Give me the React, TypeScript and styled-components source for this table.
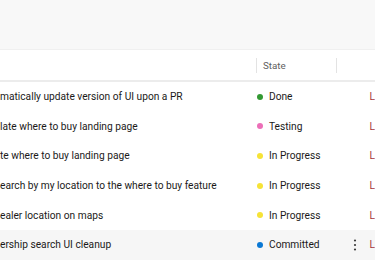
import React from "react";
import styled, { createGlobalStyle } from "styled-components";

const Global = createGlobalStyle`
  html, body { margin: 0; padding: 0; background: #ffffff; overflow: hidden; }
  body { font-family: Roboto, "Open Sans", sans-serif; }
`;

const Page = styled.div`
  width: 375px;
  height: 260px;
  overflow: hidden;
  display: flex;
  flex-direction: column;
`;

const TopBar = styled.div`
  height: 49px;
  flex: none;
  background: #f8f8f8;
  border-bottom: 1px solid #f0f0f0;
`;

const COLS = "256px 80px 1fr";

const HeaderRow = styled.div`
  display: grid;
  grid-template-columns: ${COLS};
  height: 30px;
  flex: none;
  border-bottom: 2px solid #ececec;
  align-items: center;
`;

const HeaderCell = styled.div<{ $sep?: boolean }>`
  height: 15px;
  display: flex;
  align-items: center;
  padding-left: 6px;
  border-left: ${(p) => (p.$sep ? "1px solid #e3e3e3" : "none")};
  font-size: 9.8px;
  color: #5f5f5f;
  white-space: nowrap;
`;

const Row = styled.div<{ $hover?: boolean }>`
  display: grid;
  grid-template-columns: ${COLS};
  height: 29.6px;
  flex: none;
  align-items: center;
  background: ${(p) => (p.$hover ? "#f6f6f6" : "transparent")};
  font-size: 10.2px;
  color: #1b1a19;
`;

const TitleCell = styled.div`
  white-space: nowrap;
`;

const StateCell = styled.div`
  display: flex;
  align-items: center;
  gap: 6px;
  padding-left: 1px;
  white-space: nowrap;
`;

const Dot = styled.span<{ $color: string }>`
  width: 6px;
  height: 6px;
  border-radius: 50%;
  background: ${(p) => p.$color};
  flex: none;
`;

const TailCell = styled.div`
  display: flex;
  align-items: center;
  white-space: nowrap;
  overflow: hidden;
`;

const MoreSlot = styled.span`
  width: 6px;
  margin-left: 17px;
  margin-right: 12px;
  display: flex;
  justify-content: center;
`;

const Clipped = styled.span`
  color: #a4373a;
`;

const MoreIcon = () => (
  <svg width="4" height="12" viewBox="0 0 4 12">
    <circle cx="2" cy="1.5" r="1.1" fill="#3a3a3a" />
    <circle cx="2" cy="6" r="1.1" fill="#3a3a3a" />
    <circle cx="2" cy="10.5" r="1.1" fill="#3a3a3a" />
  </svg>
);

const rows = [
  { title: "matically update version of UI upon a PR", state: "Done", color: "#339933" },
  { title: "late where to buy landing page", state: "Testing", color: "#ec6fb8" },
  { title: "te where to buy landing page", state: "In Progress", color: "#f6e337" },
  { title: "earch by my location to the where to buy feature", state: "In Progress", color: "#f6e337" },
  { title: "ealer location on maps", state: "In Progress", color: "#f6e337" },
  { title: "ership search UI cleanup", state: "Committed", color: "#0a78d4", hover: true },
];

export default function App() {
  return (
    <>
      <Global />
      <Page>
        <TopBar />
        <HeaderRow>
          <HeaderCell />
          <HeaderCell $sep>State</HeaderCell>
          <HeaderCell $sep />
        </HeaderRow>
        {rows.map((r, i) => (
          <Row key={i} $hover={r.hover}>
            <TitleCell>{r.title}</TitleCell>
            <StateCell>
              <Dot $color={r.color} />
              {r.state}
            </StateCell>
            <TailCell>
              <MoreSlot>{r.hover ? <MoreIcon /> : null}</MoreSlot>
              <Clipped>L</Clipped>
            </TailCell>
          </Row>
        ))}
      </Page>
    </>
  );
}
